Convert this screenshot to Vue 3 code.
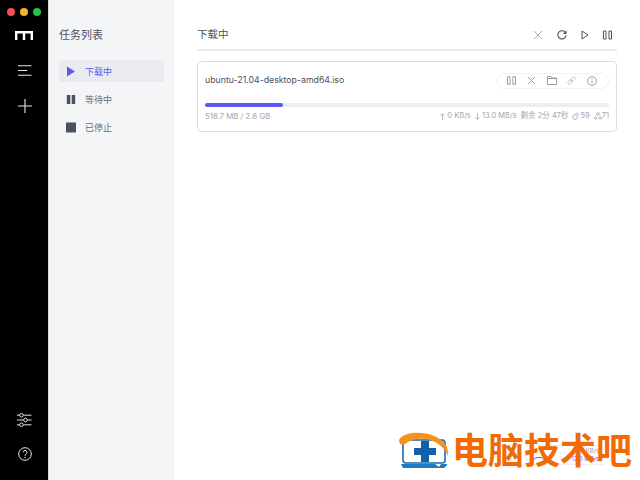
<template>
  <div class="app">
    <aside class="rail">
      <div class="lights"><i class="r"></i><i class="y"></i><i class="g"></i></div>
      <svg class="logo" width="18" height="10" viewBox="0 0 18 10"><path d="M1.200 10V2.200h15.600V10M9 2.200V10" fill="none" stroke="#fff" stroke-width="2.400"/></svg>
      <svg class="menu" width="14" height="11" viewBox="0 0 14 11"><path d="M0 .7h13.500M0 5.500h9M0 10.300h13.500" stroke="#e8e8e8" stroke-width="1.100" fill="none"/></svg>
      <svg class="plus" width="14" height="14" viewBox="0 0 14 14"><path d="M7 0v14M0 7h14" stroke="#e8e8e8" stroke-width="1.100" fill="none"/></svg>
      <div class="spacer"></div>
      <svg class="prefs" width="15" height="14" viewBox="0 0 15 14" fill="none" stroke="#e0e0e0" stroke-width="1"><path d="M0 2.200h2.500M6.500 2.200h8M0 7h6.500M10.500 7h4M0 11.800h2.500M6.500 11.800h8"/><circle cx="4.500" cy="2.200" r="1.800"/><circle cx="8.500" cy="7" r="1.800"/><circle cx="4.500" cy="11.800" r="1.800"/></svg>
      <svg class="help" width="14" height="14" viewBox="0 0 14 14" fill="none" stroke="#e8e8e8"><circle cx="7" cy="7" r="6.300" stroke-width="1"/><path d="M5 5.400a2 2 0 1 1 3.100 1.700c-.8.500-1.100.9-1.100 1.700" stroke-width="1"/><circle cx="7" cy="10.500" r=".7" fill="#e8e8e8" stroke="none"/></svg>
    </aside>
    <nav class="sub">
      <h2>任务列表</h2>
      <ul>
        <li class="active"><svg width="10" height="11" viewBox="0 0 10 11"><path d="M1 .5 9 5.500 1 10.500z" fill="#5b5bf0"/></svg><span>下载中</span></li>
        <li><svg width="10" height="11" viewBox="0 0 10 11"><path d="M.8 1h3.500v9H.8zM5.700 1h3.500v9H5.700z" fill="#4b5160"/></svg><span>等待中</span></li>
        <li><svg width="10" height="11" viewBox="0 0 10 11"><path d="M0 .5h10v10H0z" fill="#4b5160"/></svg><span>已停止</span></li>
      </ul>
    </nav>
    <main class="main">
      <header class="head">
        <h3>下载中</h3>
        <div class="tools">
          <svg width="10" height="10" viewBox="0 0 10 10" fill="none" stroke="#a9adb5"><path d="M1 1l8 8M9 1l-8 8"/></svg>
          <svg width="10" height="10" viewBox="0 0 10 10" fill="none" stroke="#4b5160" stroke-width="1.100"><path d="M8.600 3A4.100 4.100 0 1 0 9 5.500M9 .8v2.600H6.400"/></svg>
          <svg width="8" height="10" viewBox="0 0 8 10" fill="none" stroke="#4b5160"><path d="M1 1l6 4-6 4z"/></svg>
          <svg width="9" height="10" viewBox="0 0 9 10" fill="none" stroke="#4b5160"><path d="M.5 1h2.500v8H.5zM6 1h2.500v8H6z"/></svg>
        </div>
      </header>
      <section class="card">
        <div class="row">
          <span class="name">ubuntu-21.04-desktop-amd64.iso</span>
          <div class="pill">
            <svg width="9" height="9" viewBox="0 0 9 9" fill="none" stroke="#9a9ea6"><path d="M.5.700h2.600v7.600H.5zM5.900.700h2.600v7.600H5.900z"/></svg>
            <svg width="9" height="9" viewBox="0 0 9 9" fill="none" stroke="#9a9ea6"><path d="M1 1l7 7M8 1 1 8"/></svg>
            <svg width="10" height="9" viewBox="0 0 10 9" fill="none" stroke="#9a9ea6"><path d="M.5 8.500V.500h3.500l1 1.500h4.500v6.500zM.5 2.500h9"/></svg>
            <svg width="9" height="9" viewBox="0 0 9 9" fill="none" stroke="#b0b4ba" stroke-width=".8"><g transform="rotate(-45 4.500 4.500)"><rect x="0" y="3" width="5" height="3" rx="1.500"/><rect x="4" y="3" width="5" height="3" rx="1.500"/></g></svg>
            <svg width="10" height="10" viewBox="0 0 10 10" fill="none" stroke="#9a9ea6"><circle cx="5" cy="5" r="4.300"/><path d="M5 4.400v3M5 2.500v1"/></svg>
          </div>
        </div>
        <div class="track"><div class="fill" :style="{ width: progress + '%' }"></div></div>
        <div class="stats">
          <span>516.7 MB / 2.6 GB</span>
          <div class="right">
            <span class="ic"><svg width="5" height="7" viewBox="0 0 5 7" fill="none" stroke="#a2a6ad" stroke-width=".8"><path d="M2.500 7V1M.6 2.600 2.500.6l1.900 2"/></svg>&nbsp;0 KB/s</span>
            <span class="ic"><svg width="5" height="7" viewBox="0 0 5 7" fill="none" stroke="#a2a6ad" stroke-width=".8"><path d="M2.500 0v6M.6 4.400l1.900 2 1.900-2"/></svg>&nbsp;13.0 MB/s</span>
            <span>剩余 2分 47秒</span>
            <span class="ic"><svg width="8" height="8" viewBox="0 0 8 8" fill="none" stroke="#a2a6ad" stroke-width=".8"><circle cx="3" cy="5" r="2.400"/><path d="M3 2.500 6 .8M5.500 3.500 7.500 2"/></svg>59</span>
            <span class="ic"><svg width="8" height="8" viewBox="0 0 8 8" fill="none" stroke="#a2a6ad" stroke-width=".8"><circle cx="4" cy="2" r="1.400"/><circle cx="1.700" cy="6" r="1.200"/><circle cx="6.300" cy="6" r="1.200"/></svg>71</span>
          </div>
        </div>
      </section>
    </main>
    <div class="ghost">
      <svg width="18" height="18" viewBox="0 0 18 18" fill="none" stroke="#5b5bf0" stroke-width="1"><path d="M3 14A8 8 0 0 1 15 14"/></svg>
      <div class="ghost-text"><span>0 KB/s</span><b>13.0 MB/s</b></div>
    </div>
    <div class="mark">
      <svg width="56" height="40" viewBox="0 0 56 40">
        <path d="M6 8h37c2 0 3 1 3 3v18c0 1-1 2-3 2H7c-2 0-3-1-3-3V10z" fill="#fff" stroke="#1f67a8" stroke-width="1.600"/>
        <path d="M15 16h7v-7h8v7h7v7h-7v7h-8v-7h-7z" fill="#1261a8"/>
        <path d="M2 32h34l4 3 2-3h6v1l-3 3H4z" fill="#1f7ac4"/>
        <path d="M0 8C4-2 36-3 47 13c2 3 2 8 2 11C42 6 18 2 6 12 3 14 0 12 0 8z" fill="#f5921e"/>
      </svg>
      <span>电脑技术吧</span>
    </div>
  </div>
</template>

<script setup>
const progress = 19.400
</script>

<style>
html, body { margin: 0; background: #fff; }
</style>

<style scoped>
.app { position: relative; display: flex; width: 640px; height: 480px; overflow: hidden; font-family: Inter, "Noto Sans CJK SC", sans-serif; }
.rail { width: 48px; flex: none; background: #000; border-right: 1px solid #d8d8d8; display: flex; flex-direction: column; align-items: center; padding-top: 8px; }
.lights { display: flex; gap: 5px; height: 8px; }
.lights i { width: 8px; height: 8px; border-radius: 50%; display: block; }
.r { background: #f1524e; } .y { background: #f4b32e; } .g { background: #27c23f; }
.logo { margin-top: 14px; }
.menu { margin-top: 25px; margin-left: 1px; }
.plus { margin-top: 23px; margin-left: 1px; }
.spacer { flex: 1; }
.prefs { margin-bottom: 20px; margin-left: 1px; }
.help { margin-bottom: 19px; margin-left: 1px; }
.sub { width: 125px; flex: none; background: #f4f5f7; padding: 28px 10px 0; box-sizing: border-box; }
.sub h2 { margin: 0; font-size: 11px; line-height: 14px; font-weight: 400; color: #4b5160; }
.sub ul { list-style: none; margin: 18px 0 0; padding: 0; }
.sub li { display: flex; align-items: center; height: 22px; margin-bottom: 6px; padding-left: 7px; font-size: 9px; color: #666c78; border-radius: 2px; width: 105px; box-sizing: border-box; }
.sub li span { margin-left: 9px; }
.sub li.active { background: #eaebf0; color: #5b5bf0; }
.main { flex: 1; padding: 0 23px; min-width: 0; }
.head { height: 51px; box-sizing: border-box; padding-top: 20px; border-bottom: 2px solid #ebecee; display: flex; justify-content: space-between; align-items: center; }
.head h3 { margin: 0; font-size: 10.500px; line-height: 14px; font-weight: 400; color: #4b5160; }
.tools { display: flex; gap: 14px; align-items: center; margin-right: 5px; }
.card { margin-top: 10px; height: 71px; box-sizing: border-box; border: 1px solid #dcdde0; border-radius: 4px; padding: 0 7px; }
.row { display: flex; justify-content: space-between; align-items: center; height: 36px; }
.name { font-size: 8.750px; color: #4b5160; }
.pill { display: flex; align-items: center; justify-content: space-between; width: 113px; height: 16px; box-sizing: border-box; padding: 0 11px 0 10px; border: 1px solid #f0f1f3; border-radius: 9px; margin-top: 1px; }
.track { height: 4px; background: #ebedf5; border-radius: 2px; margin-top: 5px; }
.fill { height: 4px; background: #5b5bf0; border-radius: 2px; }
.stats { display: flex; justify-content: space-between; font-size: 7.800px; line-height: 10px; color: #a2a6ad; margin-top: 4px; }
.right { display: flex; gap: 4px; font-size: 7.500px; }
.ic { display: inline-flex; align-items: center; gap: 0; }
.ghost { position: absolute; left: 525px; top: 445px; width: 87px; height: 20px; box-sizing: border-box; border: 1px solid #eeeff1; border-radius: 10px; display: flex; align-items: center; justify-content: space-between; padding: 0 12px 0 4px; }
.ghost-text { font-size: 6px; line-height: 8px; color: #9a9ea6; text-align: right; }
.ghost-text span { display: block; }
.ghost-text b { display: block; font-weight: 400; color: #5b5bf0; }
.mark { position: absolute; left: 398px; top: 427px; display: flex; align-items: flex-start; }
.mark svg { margin: 5px 0 0 1px; }
.mark span { font-family: "Noto Sans CJK SC", sans-serif; font-size: 36px; line-height: 42px; font-weight: 700; color: #f26a06; margin-left: -3px; white-space: nowrap; }
</style>
